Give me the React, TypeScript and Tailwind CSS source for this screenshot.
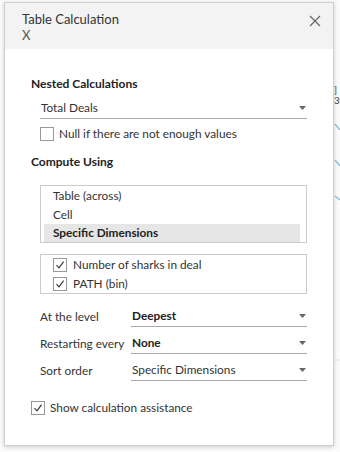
import React from 'react';

const font = { fontFamily: 'Lato, "Open Sans", sans-serif' };

function Check({ checked }: { checked: boolean }) {
  return (
    <span className="flex h-[14px] w-[14px] shrink-0 items-center justify-center border border-[#999999] bg-white">
      {checked && (
        <svg width="10" height="10" viewBox="0 0 10 10" fill="none">
          <path d="M1.5 5.2 L4 7.8 L8.6 1.6" stroke="#333" strokeWidth="1.1" />
        </svg>
      )}
    </span>
  );
}

function Caret() {
  return (
    <svg width="7" height="4" viewBox="0 0 7 4" className="shrink-0">
      <path d="M0 0 H7 L3.5 4 Z" fill="#666" />
    </svg>
  );
}

function Dropdown({ value, bold }: { value: string; bold?: boolean }) {
  return (
    <div className="flex h-[22px] flex-1 items-center justify-between border-b border-[#a8a8a8] pl-[1px] pr-[1px]">
      <span className={bold ? 'font-bold text-[#222]' : 'text-[#333]'}>{value}</span>
      <Caret />
    </div>
  );
}

const levels = [
  { label: 'At the level', value: 'Deepest', bold: true },
  { label: 'Restarting every', value: 'None', bold: true },
  { label: 'Sort order', value: 'Specific Dimensions', bold: false },
];

export default function App() {
  return (
    <div className="relative h-[452px] w-[340px] overflow-hidden bg-[#fbfbfb] text-[11.8px] text-[#333]" style={font}>
      {/* faint workbook behind the dialog */}
      <svg className="absolute right-0 top-0" width="10" height="452" viewBox="0 0 10 452">
        <line x1="0" y1="100" x2="10" y2="100" stroke="#e6e6e6" />
        <line x1="0" y1="360" x2="10" y2="360" stroke="#e6e6e6" />
        <line x1="5" y1="124" x2="10" y2="130" stroke="#8cc3dc" strokeWidth="1.5" />
        <line x1="5" y1="160" x2="10" y2="166" stroke="#8cc3dc" strokeWidth="1.5" />
        <line x1="5" y1="196" x2="10" y2="200" stroke="#8cc3dc" strokeWidth="1.5" />
        <text x="4" y="93" fontSize="10" fill="#444">]</text>
        <text x="4" y="104" fontSize="10" fill="#444">3</text>
      </svg>

      <div className="relative ml-[4px] mt-[2px] flex h-[444px] w-[330px] flex-col border border-[#cfcfcf] bg-white shadow-[0_1px_4px_rgba(0,0,0,0.2)]">
        {/* header */}
        <div className="flex h-[46px] items-start justify-between bg-[#f3f3f3] pl-[17px] pr-[12px] pt-[8px]">
          <div className="flex flex-col text-[13px] leading-[16px] text-[#333]">
            <span>Table Calculation</span>
            <span className="text-[#555]">X</span>
          </div>
          <svg width="12" height="12" viewBox="0 0 12 12" className="mt-[4px]">
            <path d="M1 1 L11 11 M11 1 L1 11" stroke="#666" strokeWidth="1.2" />
          </svg>
        </div>

        <div className="flex flex-col pl-[26px] pr-[26px]">
          <div className="mt-[27px] h-[16px] text-[12px] font-bold leading-[16px] text-[#222]">Nested Calculations</div>

          <div className="ml-[9px] mt-[5px] flex">
            <Dropdown value="Total Deals" />
          </div>

          <div className="ml-[9px] mt-[5px] flex h-[20px] items-center gap-[5px]">
            <Check checked={false} />
            <span>Null if there are not enough values</span>
          </div>

          <div className="mt-[10px] h-[16px] text-[12px] font-bold leading-[16px] text-[#222]">Compute Using</div>

          <div className="ml-[9px] mt-[15px] flex h-[58px] flex-col border border-[#cccccc] py-0 pl-[3px] pr-[6px]">
            <div className="flex h-[19px] items-center pl-[9px]">Table (across)</div>
            <div className="flex h-[19px] items-center pl-[9px]">Cell</div>
            <div className="flex h-[18px] items-center bg-[#e6e6e6] pl-[9px] font-bold text-[#222]">Specific Dimensions</div>
          </div>

          <div className="ml-[9px] mt-[11px] flex h-[40px] flex-col border border-[#cccccc] pl-[12px]">
            <div className="flex h-[19px] items-center gap-[6px]">
              <Check checked />
              <span>Number of sharks in deal</span>
            </div>
            <div className="flex h-[19px] items-center gap-[6px]">
              <Check checked />
              <span>PATH (bin)</span>
            </div>
          </div>

          <div className="ml-[9px] mt-[11px] flex flex-col gap-[5px]">
            {levels.map((row) => (
              <div key={row.label} className="flex items-center">
                <span className="w-[91px] shrink-0 pt-[1px]">{row.label}</span>
                <Dropdown value={row.value} bold={row.bold} />
              </div>
            ))}
          </div>

          <div className="mt-[17px] flex h-[20px] items-center gap-[5px]">
            <Check checked />
            <span>Show calculation assistance</span>
          </div>
        </div>
      </div>
    </div>
  );
}
